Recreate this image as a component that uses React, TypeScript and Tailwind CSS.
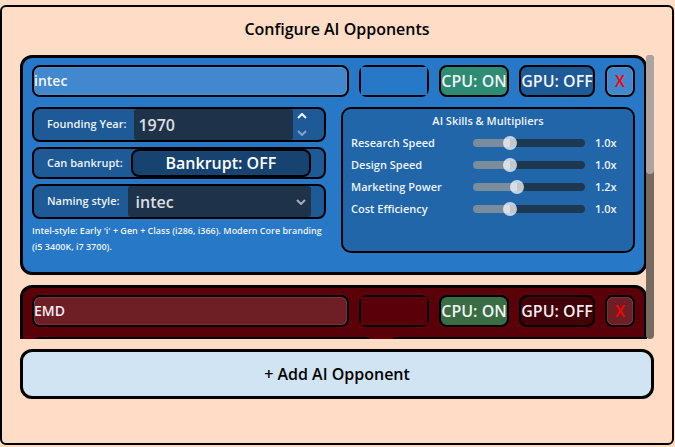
import { useState } from "react";

type Opponent = {
  id: number;
  name: string;
  color: string;
  cpu: boolean;
  gpu: boolean;
  year: number;
  bankrupt: boolean;
  style: string;
  skills: number[];
};

const skillLabels = ["Research Speed", "Design Speed", "Marketing Power", "Cost Efficiency"];

const styleHints: Record<string, string> = {
  intec: "Intel-style: Early 'i' + Gen + Class (i286, i366). Modern Core branding (i5 3400K, i7 3700).",
  EMD: "AMD-style: Early 'Em' + Gen + Class (Em286, Em386). Modern branding (R5 3600, R7 3700X).",
};

const styleColumns: Record<string, string> = {
  intec: "grid-cols-2",
  EMD: "grid-cols-[29fr_20fr]",
};

const initialOpponents: Opponent[] = [
  { id: 1, name: "intec", color: "#2878c8", cpu: true, gpu: false, year: 1970, bankrupt: false, style: "intec", skills: [1, 1, 1.2, 1] },
  { id: 2, name: "EMD", color: "#5a0009", cpu: true, gpu: false, year: 1970, bankrupt: false, style: "EMD", skills: [1, 1, 1, 1.2] },
];

const MIN_SKILL = 0.1;
const MAX_SKILL = 3;

function Chevron({ up = false }: { up?: boolean }) {
  return (
    <svg width="10" height="6" viewBox="0 0 10 6" fill="none" stroke="currentColor" strokeWidth="2">
      <path d={up ? "M1 5l4-4 4 4" : "M1 1l4 4 4-4"} />
    </svg>
  );
}

function ToggleButton({ label, on, onClick, className }: { label: string; on: boolean; onClick: () => void; className: string }) {
  return (
    <button
      type="button"
      aria-pressed={on}
      onClick={onClick}
      className={`${className} ${on ? "bg-[#309158]/75" : "bg-black/25"} flex items-center justify-center shrink-0 h-8 rounded-lg border-2 border-black text-base whitespace-nowrap`}
    >
      {label}: {on ? "ON" : "OFF"}
    </button>
  );
}

function SkillSlider({ id, label, value, onChange }: { id: string; label: string; value: number; onChange: (v: number) => void }) {
  const ratio = (value - MIN_SKILL) / (MAX_SKILL - MIN_SKILL);
  const stop = `calc(7px + (100% - 14px) * ${ratio})`;

  return (
    <div className="flex items-center gap-2.5 h-[22px] text-[11px]">
      <label htmlFor={id} className="flex-1 whitespace-nowrap">{label}</label>
      <input
        id={id}
        type="range"
        min={MIN_SKILL}
        max={MAX_SKILL}
        step={0.1}
        value={value}
        onChange={(e) => onChange(Number(e.target.value))}
        style={{ backgroundImage: `linear-gradient(to right, #7b8c9c ${stop}, #1e3852 ${stop})` }}
        className="flex-1 min-w-0 h-2 rounded-full appearance-none [&::-webkit-slider-thumb]:appearance-none [&::-webkit-slider-thumb]:size-3.5 [&::-webkit-slider-thumb]:rounded-full [&::-webkit-slider-thumb]:bg-white/72"
      />
      <output htmlFor={id} className="w-[30px]">{value.toFixed(1)}x</output>
    </div>
  );
}

function OpponentCard({ opponent, onChange, onRemove }: { opponent: Opponent; onChange: (patch: Partial<Opponent>) => void; onRemove: () => void }) {
  const { id, name, color, cpu, gpu, year, bankrupt, style, skills } = opponent;
  const row = "flex items-center gap-2 pl-[13px] pr-[13px] rounded-lg border-2 border-black bg-black/25";

  return (
    <section
      style={{ backgroundColor: color }}
      className="shrink-0 rounded-xl border-3 border-black px-[9px] pt-[7px] pb-[17px] text-white/95"
    >
      {/* Name, colour, product toggles */}
      <div className="flex gap-2.5 mb-2.5">
        <input
          aria-label="Company name"
          value={name}
          onChange={(e) => onChange({ name: e.target.value })}
          className="flex-1 min-w-0 h-8 pb-0.5 rounded-lg border-2 border-black bg-white/12 text-sm font-semibold shadow-[inset_0_0_1px_rgba(255,255,255,0.8)]"
        />
        <div className="shrink-0 w-[70px] h-8 rounded-lg border-2 border-black">
          <input
            type="color"
            aria-label="Company color"
            value={color}
            onChange={(e) => onChange({ color: e.target.value })}
            className="block w-full h-full p-0 appearance-none [&::-webkit-color-swatch-wrapper]:p-0 [&::-webkit-color-swatch]:border-0 [&::-webkit-color-swatch]:rounded-none"
          />
        </div>
        <ToggleButton label="CPU" on={cpu} onClick={() => onChange({ cpu: !cpu })} className="w-[70px]" />
        <ToggleButton label="GPU" on={gpu} onClick={() => onChange({ gpu: !gpu })} className="w-[76px]" />
        <button
          type="button"
          aria-label="Remove opponent"
          onClick={onRemove}
          className="shrink-0 w-[30px] h-8 rounded-lg border-2 border-black bg-white/12 text-base text-[#ff0000] shadow-[inset_0_0_1px_rgba(255,255,255,0.8)]"
        >
          X
        </button>
      </div>

      <div className={`grid ${styleColumns[style]} items-start gap-[15px]`}>
        <div>
          <div className="flex flex-col gap-[5px]">
            <div className={`${row} h-[35px]`}>
              <label htmlFor={`year-${id}`} className="text-[11px] whitespace-nowrap">Founding Year:</label>
              <div className="flex flex-1 min-w-0 h-full">
                <input
                  id={`year-${id}`}
                  type="number"
                  value={year}
                  onChange={(e) => onChange({ year: Number(e.target.value) })}
                  className="flex-1 min-w-0 h-full pl-1 rounded-[3px] bg-[#1e334a] text-base text-[#dcdfe2] [appearance:textfield] [&::-webkit-inner-spin-button]:appearance-none"
                />
                <div className="flex flex-col justify-between items-center w-[18px] py-1">
                  <button type="button" aria-label="Next year" onClick={() => onChange({ year: year + 1 })}>
                    <Chevron up />
                  </button>
                  <button type="button" aria-label="Previous year" className="text-white/45" onClick={() => onChange({ year: year - 1 })}>
                    <Chevron />
                  </button>
                </div>
              </div>
            </div>

            <div className={`${row} h-8`}>
              <span className="text-[11px] whitespace-nowrap">Can bankrupt:</span>
              <button
                type="button"
                aria-pressed={bankrupt}
                onClick={() => onChange({ bankrupt: !bankrupt })}
                className="flex items-center justify-center flex-1 h-7 rounded-lg border-2 border-black bg-black/25 text-base text-white"
              >
                Bankrupt: {bankrupt ? "ON" : "OFF"}
              </button>
            </div>

            <div className={`${row} h-[35px]`}>
              <label htmlFor={`style-${id}`} className="text-[11px] whitespace-nowrap">Naming style:</label>
              <div className="relative flex-1 h-full">
                <select
                  id={`style-${id}`}
                  value={style}
                  onChange={(e) => onChange({ style: e.target.value })}
                  className="w-full h-full pl-2 rounded-[3px] bg-[#1e334a] text-base text-[#dcdfe2] appearance-none"
                >
                  <option>intec</option>
                  <option>EMD</option>
                </select>
                <span className="absolute right-[5px] inset-y-0 flex items-center text-[#a5adb5] pointer-events-none">
                  <Chevron />
                </span>
              </div>
            </div>
          </div>
          <p className="mt-1 text-[9px] leading-4">{styleHints[style]}</p>
        </div>

        {/* Skills */}
        <div className="min-h-[146px] rounded-[10px] border-2 border-black bg-black/15 px-2 pt-[3px]">
          <h2 className="h-5 text-center text-[11px] leading-[18px]">AI Skills &amp; Multipliers</h2>
          {skillLabels.map((label, i) => (
            <SkillSlider
              key={label}
              id={`skill-${id}-${i}`}
              label={label}
              value={skills[i]}
              onChange={(v) => onChange({ skills: skills.map((s, j) => (j === i ? v : s)) })}
            />
          ))}
        </div>
      </div>
    </section>
  );
}

export default function App() {
  const [opponents, setOpponents] = useState(initialOpponents);

  const update = (id: number, patch: Partial<Opponent>) =>
    setOpponents((list) => list.map((o) => (o.id === id ? { ...o, ...patch } : o)));

  const add = () =>
    setOpponents((list) => [...list, { ...initialOpponents[0], id: Date.now(), name: "New Company", color: "#2f6b4a" }]);

  return (
    <div className="flex flex-col h-screen pt-[5px] pr-px pb-0.5 bg-[#ffdcc6] font-['Open_Sans',sans-serif] font-semibold">
      <main className="flex flex-col flex-1 min-h-0 rounded-md border-2 border-black px-[18px] pb-11">
        <h1 className="mb-1 text-center text-base leading-[44px] text-black">Configure AI Opponents</h1>

        <div className="flex flex-1 min-h-0">
          <div className="flex flex-col gap-2.5 flex-1 min-w-0 overflow-y-auto [scrollbar-width:none]">
            {opponents.map((o) => (
              <OpponentCard
                key={o.id}
                opponent={o}
                onChange={(patch) => update(o.id, patch)}
                onRemove={() => setOpponents((list) => list.filter((x) => x.id !== o.id))}
              />
            ))}
          </div>
          <div className="relative w-2 -ml-px rounded-full bg-[#78695f]">
            <div className="h-[42%] rounded-full bg-[#aea49f]" />
          </div>
        </div>

        <button
          type="button"
          onClick={add}
          className="shrink-0 mt-2.5 h-[50px] rounded-xl border-3 border-black bg-[#d1e4f3] text-base text-black"
        >
          + Add AI Opponent
        </button>
      </main>
    </div>
  );
}
